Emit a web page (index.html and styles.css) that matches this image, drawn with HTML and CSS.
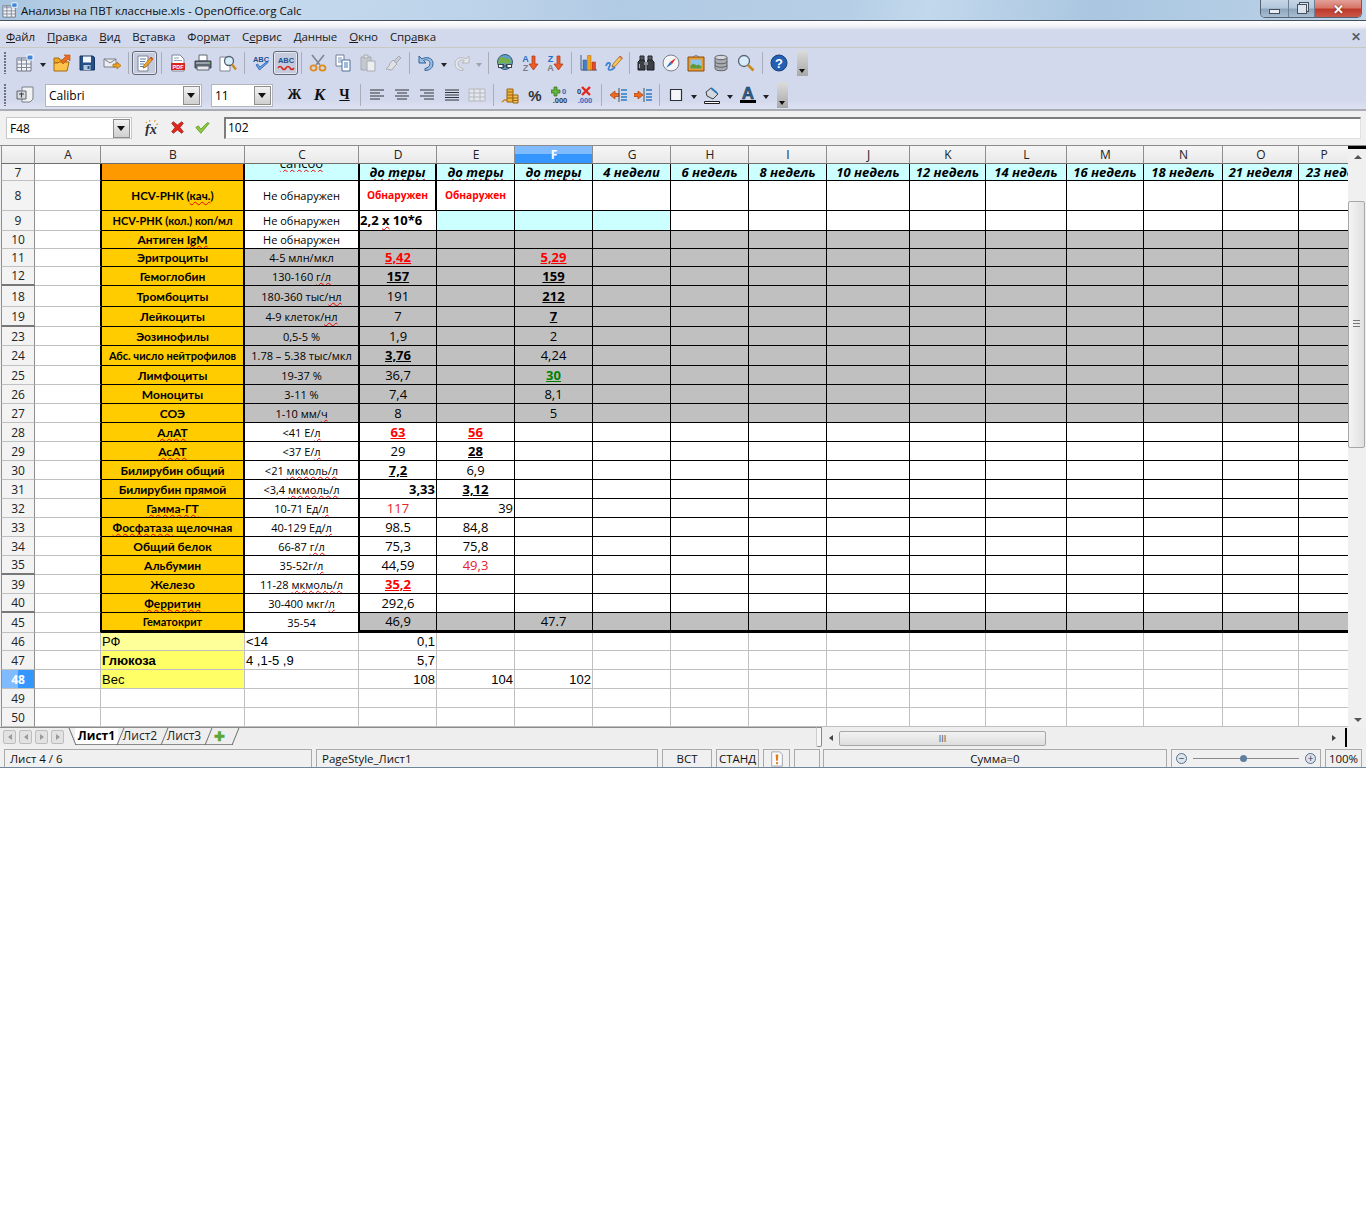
FILE: index.html
```html
<!DOCTYPE html>
<html lang="ru">
<head>
  <meta charset="UTF-8">
  <title>Анализы на ПВТ классные.xls - OpenOffice.org Calc</title>
  <link rel="stylesheet" href="styles.css">
</head>
<body>
  <!-- icon sprite -->
  <svg class="sprite" xmlns="http://www.w3.org/2000/svg">
    <symbol id="i-table" viewBox="0 0 18 18"><path d="M1 4h14v13H1z" fill="#f2f4f8" stroke="#6b7280"/><path d="M1 4h14v3H1z" fill="#aab4c4"/><path d="M1 10h14M1 13.500h14M5.500 4v13M10.500 4v13" stroke="#7d8796" fill="none"/><path d="M11 1h6v5h-6z" fill="#3f86d8" stroke="#fff"/></symbol>
    <symbol id="i-open" viewBox="0 0 18 18"><path d="M1 4h5l1 2h6v3H1z" fill="#f2a91e" stroke="#a36a12"/><path d="M1 17V9h4l1-1h10l-2 9z" fill="#fbc34a" stroke="#a36a12"/><path d="M8 7l5-5-2-1h6v6l-2-2-5 5z" fill="#ee6b1e" stroke="#b4470c" stroke-width=".6"/></symbol>
    <symbol id="i-save" viewBox="0 0 18 18"><path d="M2 2h13l1.500 1.500V16H2z" fill="#24508c" stroke="#17365f"/><path d="M5 2.500h8v6H5z" fill="#f4f6fa"/><path d="M5.500 11h7v5h-7z" fill="#b8c8dc"/><path d="M9.500 12h2v3h-2z" fill="#24508c"/></symbol>
    <symbol id="i-mail" viewBox="0 0 18 18"><path d="M1 5h12v8H1z" fill="#eceef2" stroke="#7b8088"/><path d="M1 5l6 4 6-4" fill="none" stroke="#7b8088"/><path d="M10 10h4V8l4 3.500-4 3.500v-2h-4z" fill="#f0a020" stroke="#a86a10" stroke-width=".7"/></symbol>
    <symbol id="i-edit" viewBox="0 0 18 18"><path d="M2 2h10v15H2z" fill="#fff" stroke="#7d8696"/><path d="M4 5h6M4 7.500h5M4 10h4M4 12.500h3" stroke="#5b7fb0"/><path d="M7 14l1-3 7-8 2 2-7 8z" fill="#f3a52a" stroke="#8a5510" stroke-width=".7"/><path d="M14 4l1-1 2 2-1 1z" fill="#d8402c"/></symbol>
    <symbol id="i-pdf" viewBox="0 0 18 18"><path d="M3 1h8l4 4v12H3z" fill="#fff" stroke="#7d8696"/><path d="M5 4h5M5 6.500h8" stroke="#8aa0bd"/><path d="M2 9h14v7H2z" fill="#d9261c"/><text class="svg-pdf" x="9" y="15" text-anchor="middle">PDF</text></symbol>
    <symbol id="i-print" viewBox="0 0 18 18"><path d="M5 1h8v6H5z" fill="#fff" stroke="#5e6672"/><path d="M1 7h16v7H1z" fill="#5e6672" stroke="#3a414a"/><path d="M2 8h14v2H2z" fill="#9aa3ae"/><path d="M3 12h12v4H3z" fill="#e8eaee" stroke="#5e6672"/><path d="M14 9h2v1h-2z" fill="#5fc04a"/></symbol>
    <symbol id="i-preview" viewBox="0 0 18 18"><path d="M1 3h10v14H1z" fill="#fff" stroke="#7d8696"/><circle cx="10" cy="7" r="4.500" fill="#d6ecfa" stroke="#55606e" stroke-width="1.300"/><path d="M13 10.500l4 5" stroke="#c98a1e" stroke-width="2.400"/></symbol>
    <symbol id="i-spell" viewBox="0 0 18 18"><text class="svg-abc" x="9" y="8" text-anchor="middle" fill="#1d4f94">ABC</text><path d="M4 11l3.500 5L16 8.500l-1-1L8 13l-2.500-3z" fill="#6da3e6" stroke="#1d5eb0" stroke-width=".8"/></symbol>
    <symbol id="i-auto" viewBox="0 0 18 18"><text class="svg-abc" x="9" y="9" text-anchor="middle" fill="#1d4f94">ABC</text><path d="M1 14q2-3 4 0t4 0 4 0 4 0" fill="none" stroke="#d8281c" stroke-width="1.600"/></symbol>
    <symbol id="i-cut" viewBox="0 0 18 18"><path d="M3 1l8 10M15 1L7 11" stroke="#7c8590" stroke-width="1.600"/><ellipse cx="4.500" cy="14" rx="3" ry="2.600" fill="none" stroke="#e08a1a" stroke-width="1.800"/><ellipse cx="13.500" cy="14" rx="3" ry="2.600" fill="none" stroke="#e08a1a" stroke-width="1.800"/></symbol>
    <symbol id="i-copy" viewBox="0 0 18 18"><path d="M2 1h8v11H2z" fill="#fff" stroke="#6e7f96"/><path d="M4 4h4M4 6h4M4 8h4" stroke="#6e90bd"/><path d="M8 6h8v11H8z" fill="#fff" stroke="#4f6f9c"/><path d="M10 9h4M10 11h4M10 13h4" stroke="#3c78c0"/></symbol>
    <symbol id="i-paste" viewBox="0 0 18 18"><path d="M2 3h10v13H2z" fill="#c5c9cf" stroke="#a7abb2"/><path d="M5 1h4v3H5z" fill="#dfe1e4" stroke="#a7abb2"/><path d="M8 7h8v10H8z" fill="#eceef0" stroke="#a7abb2"/></symbol>
    <symbol id="i-brush" viewBox="0 0 18 18"><path d="M10 7l5-5 2 2-5 5z" fill="#c9ccd1" stroke="#a7abb2"/><path d="M9 6l4 4-3 3-2 3-6-1 3-3 1-3z" fill="#dfe1e4" stroke="#a7abb2"/></symbol>
    <symbol id="i-undo" viewBox="0 0 18 18"><path d="M2 2v7h7L6.500 6.500C9 5 13 6 13 9.500c0 3-2.500 4.500-5 5v2c5 0 8-3 8-7C16 4 9.500 2 5 5z" fill="#9cc0e8" stroke="#2f5f96"/></symbol>
    <symbol id="i-redo" viewBox="0 0 18 18"><path d="M16 2v7H9l2.500-2.500C9 5 5 6 5 9.500c0 3 2.500 4.500 5 5v2c-5 0-8-3-8-7C2 4 8.500 2 13 5z" fill="#e6e8ea" stroke="#b4b7bc"/></symbol>
    <symbol id="i-link" viewBox="0 0 18 18"><circle cx="9" cy="8" r="7.500" fill="#5d9fd0" stroke="#3e5a70"/><path d="M3 4q4-2 6 0t5 0l1 4-3 2-5-1-5 1z" fill="#77b04a"/><path d="M2 12h6M10 12h6" stroke="#fff" stroke-width="3"/><path d="M2.500 10.500h5v3h-5zM10.500 10.500h5v3h-5zM6 12h6" fill="none" stroke="#3a4650" stroke-width="1.100"/></symbol>
    <symbol id="i-az" viewBox="0 0 18 18"><text class="svg-sort" x="4.500" y="8" text-anchor="middle" fill="#1f6fc8">A</text><text class="svg-sort" x="4.500" y="17" text-anchor="middle" fill="#7b8088">Z</text><path d="M11 2h3v8h3l-4.500 6L8 10h3z" fill="#ee5a2a" stroke="#a83410" stroke-width=".7"/></symbol>
    <symbol id="i-za" viewBox="0 0 18 18"><text class="svg-sort" x="4.500" y="8" text-anchor="middle" fill="#1f6fc8">Z</text><text class="svg-sort" x="4.500" y="17" text-anchor="middle" fill="#7b8088">A</text><path d="M11 2h3v8h3l-4.500 6L8 10h3z" fill="#ee5a2a" stroke="#a83410" stroke-width=".7"/></symbol>
    <symbol id="i-chart" viewBox="0 0 18 18"><path d="M1 1v15h16" fill="none" stroke="#3d5a80"/><path d="M3 6h3.500v10H3z" fill="#3f7fd0" stroke="#234f8a" stroke-width=".5"/><path d="M7.500 1.500H11V16H7.500z" fill="#f2a21e" stroke="#a86a10" stroke-width=".5"/><path d="M12 8h3.500v8H12z" fill="#e0492a" stroke="#983014" stroke-width=".5"/></symbol>
    <symbol id="i-draw" viewBox="0 0 18 18"><path d="M1 12c1-4 5-4 4-1s-3 5 0 5 4-2 5-3" fill="none" stroke="#3f7fd0" stroke-width="1.700"/><path d="M7 13l1-3 7-8 2.500 2-7 8z" fill="#f6c65a" stroke="#8a5510" stroke-width=".7"/><path d="M14 3l1-1 2.500 2-1 1z" fill="#e0655a"/></symbol>
    <symbol id="i-find" viewBox="0 0 18 18"><path d="M3 2h4v5H3zM11 2h4v5h-4z" fill="#55585e" stroke="#24262a"/><path d="M1 8l2-2h4l1 3v7H1zM17 8l-2-2h-4l-1 3v7h7z" fill="#3b3e44" stroke="#1a1c20"/><path d="M7 8h4v3H7z" fill="#8a8e96"/><path d="M2.500 10v4" stroke="#a3a8b0"/></symbol>
    <symbol id="i-nav" viewBox="0 0 18 18"><circle cx="9" cy="9" r="8" fill="#f4f6f8" stroke="#7b8088"/><path d="M14 4L8 8l2 2z" fill="#d8281c"/><path d="M4 14l4-6 2 2z" fill="#2b6cc4"/></symbol>
    <symbol id="i-gallery" viewBox="0 0 18 18"><path d="M6 3l3-2 3 2" fill="none" stroke="#8a8e96"/><path d="M1 3h16v14H1z" fill="#e89a2c" stroke="#8a4a10"/><path d="M3.500 5.500h11v9h-11z" fill="#8ec4ea"/><path d="M3.500 14.500v-3l3-2 3 2 2-1 3 2v2z" fill="#5f9a38"/></symbol>
    <symbol id="i-db" viewBox="0 0 18 18"><path d="M3 3.500v11c0 3 12 3 12 0v-11z" fill="#a9adb2" stroke="#5e6268"/><ellipse cx="9" cy="3.500" rx="6" ry="2.200" fill="#d5d7da" stroke="#5e6268"/><path d="M3 7.500c0 3 12 3 12 0M3 11c0 3 12 3 12 0" fill="none" stroke="#5e6268"/></symbol>
    <symbol id="i-zoom" viewBox="0 0 18 18"><circle cx="7" cy="7" r="5.500" fill="#d6ecfa" stroke="#5a6470" stroke-width="1.300"/><path d="M11 11l5.500 5.500" stroke="#c98a1e" stroke-width="2.600"/></symbol>
    <symbol id="i-help" viewBox="0 0 18 18"><circle cx="9" cy="9" r="8" fill="#2360b4" stroke="#173f7a"/><text class="svg-help" x="9" y="14" text-anchor="middle">?</text></symbol>
    <symbol id="i-style" viewBox="0 0 18 18"><path d="M6 1h11v12l-3 3H6z" fill="#f0f1f3" stroke="#7b8088"/><path d="M1 5h9v8H1z" fill="#d9dce1" stroke="#5e6268"/><path d="M5.500 6.500v5M3 8h5" stroke="#3a3e44" stroke-width="1.200"/></symbol>
    <symbol id="i-left" viewBox="0 0 18 18"><path d="M2 4h14M2 7h10M2 10h14M2 13h10" stroke="#30343a"/></symbol>
    <symbol id="i-center" viewBox="0 0 18 18"><path d="M2 4h14M4 7h10M2 10h14M4 13h10" stroke="#30343a"/></symbol>
    <symbol id="i-right" viewBox="0 0 18 18"><path d="M2 4h14M6 7h10M2 10h14M6 13h10" stroke="#30343a"/></symbol>
    <symbol id="i-just" viewBox="0 0 18 18"><path d="M2 4h14M2 6.500h14M2 9h14M2 11.500h14M2 14h14" stroke="#30343a"/></symbol>
    <symbol id="i-grid" viewBox="0 0 18 18"><path d="M1 3h16v12H1z" fill="#e4e7ee" stroke="#b4b7bc"/><path d="M1 7h16M1 11h16M6 3v12M12 3v12" stroke="#b4b7bc"/></symbol>
    <symbol id="i-coins" viewBox="0 0 18 18"><path d="M1 16q4-4 6-1" fill="none" stroke="#c98a1e" stroke-width="1.500"/><path d="M6 3h6v13H6z" fill="#efb43c" stroke="#9a6410"/><path d="M6 6h6M6 9h6M6 12h6" stroke="#9a6410"/><path d="M12 9h5v8h-5z" fill="#f4c65a" stroke="#9a6410"/><path d="M12 12h5M12 14.500h5" stroke="#9a6410"/></symbol>
    <symbol id="i-percent" viewBox="0 0 18 18"><text class="svg-pct" x="9" y="15" text-anchor="middle">%</text></symbol>
    <symbol id="i-adddec" viewBox="0 0 18 18"><path d="M3 1h3v3h3v3H6v3H3V7H0V4h3z" fill="#64b43c" stroke="#2f6e18" stroke-width=".7"/><text class="svg-dec" x="13" y="8" text-anchor="middle" fill="#2b6cc4">0</text><text class="svg-dec" x="9" y="17" text-anchor="middle" fill="#30343a">.000</text></symbol>
    <symbol id="i-deldec" viewBox="0 0 18 18"><text class="svg-dec" x="3" y="8" text-anchor="middle" fill="#30343a">0</text><path d="M6 1l8 8M14 1L6 9" stroke="#e0281c" stroke-width="2.400"/><text class="svg-dec" x="9" y="17" text-anchor="middle" fill="#2b6cc4">.000</text></symbol>
    <symbol id="i-outdent" viewBox="0 0 18 18"><path d="M1 9l5-4v2.500h4v3H6V13z" fill="#ee6b1e" stroke="#a83e0c" stroke-width=".7"/><path d="M10 2v14" stroke="#4a4e56"/><path d="M12 4h6M12 8h6M12 11h6M12 14h6" stroke="#2b7cc4" stroke-width="1.300"/></symbol>
    <symbol id="i-indent" viewBox="0 0 18 18"><path d="M9 9L4 5v2.500H0v3h4V13z" fill="#ee6b1e" stroke="#a83e0c" stroke-width=".7"/><path d="M10 2v14" stroke="#4a4e56"/><path d="M12 4h6M12 8h6M12 11h6M12 14h6" stroke="#2b7cc4" stroke-width="1.300"/></symbol>
    <symbol id="i-border" viewBox="0 0 18 18"><path d="M3.500 3.500h11v11h-11z" fill="#f4f6fa" stroke="#2c3038" stroke-width="1.200"/></symbol>
    <symbol id="i-bucket" viewBox="0 0 18 18"><path d="M3 6l5-4 7 6-5 5-6-3z" fill="#d5d9de" stroke="#3a3e44"/><path d="M8 2l6 5" stroke="#2b7cc4" stroke-width="2"/><path d="M1.500 15.500h15v2h-15z" fill="#fff" stroke="#1c1e22"/></symbol>
    <symbol id="i-fontcolor" viewBox="0 0 18 18"><text class="svg-fc" x="9" y="13" text-anchor="middle">A</text><path d="M1 14h16v3H1z" fill="#000"/></symbol>
    <symbol id="i-fx" viewBox="0 0 18 18"><text class="svg-fx" x="1" y="16">fx</text><path d="M2 3l1 1M6 1v2M12 1l-1 2M15 5l-2 1" stroke="#d9a020" stroke-width="1.200"/></symbol>
    <symbol id="i-cancel" viewBox="0 0 18 18"><path d="M4 2l5 4 5-4 2 2-4 5 4 5-2 2-5-4-5 4-2-2 4-5-4-5z" fill="#e0281c" stroke="#8e140c" stroke-width=".8"/></symbol>
    <symbol id="i-accept" viewBox="0 0 18 18"><path d="M1 9l3-2 3 4 8-8 2 1-10 12z" fill="#8ecb3c" stroke="#4a8212" stroke-width=".8"/></symbol>
    <symbol id="i-warn" viewBox="0 0 18 18"><path d="M3 1h9l3 3v13H3z" fill="#fbfbfb" stroke="#9a9ea6"/><path d="M7.500 4h3l-.5 7H8zM8 12.500h2v2.500H8z" fill="#e07a14"/></symbol>
  </svg>

  <div class="window">
    <div class="titlebar">
      <svg class="app-icon"><use href="#i-table"/></svg>
      <span class="title-text">Анализы на ПВТ классные.xls - OpenOffice.org Calc</span>
      <div class="win-buttons">
        <div class="win-btn win-min"><span class="min-glyph"></span></div>
        <div class="win-btn win-max"><span class="max-glyph"></span></div>
        <div class="win-btn win-close">✕</div>
      </div>
    </div>

    <div class="menubar">
      <span><u>Ф</u>айл</span>
      <span><u>П</u>равка</span>
      <span><u>В</u>ид</span>
      <span>В<u>с</u>тавка</span>
      <span>Фо<u>р</u>мат</span>
      <span>С<u>е</u>рвис</span>
      <span><u>Д</u>анные</span>
      <span><u>О</u>кно</span>
      <span>Спр<u>а</u>вка</span>
      <span class="doc-close">✕</span>
    </div>

    <!-- Standard toolbar -->
    <div class="toolbar tb-standard">
      <i class="grip"></i>
      <button class="btn"><svg><use href="#i-table"/></svg></button><i class="drop"></i>
      <button class="btn"><svg><use href="#i-open"/></svg></button>
      <button class="btn"><svg><use href="#i-save"/></svg></button>
      <button class="btn"><svg><use href="#i-mail"/></svg></button>
      <i class="sep"></i>
      <button class="btn on"><svg><use href="#i-edit"/></svg></button>
      <i class="sep"></i>
      <button class="btn"><svg><use href="#i-pdf"/></svg></button>
      <button class="btn"><svg><use href="#i-print"/></svg></button>
      <button class="btn"><svg><use href="#i-preview"/></svg></button>
      <i class="sep"></i>
      <button class="btn"><svg><use href="#i-spell"/></svg></button>
      <button class="btn on"><svg><use href="#i-auto"/></svg></button>
      <i class="sep sep-7"></i>
      <button class="btn"><svg><use href="#i-cut"/></svg></button>
      <button class="btn"><svg><use href="#i-copy"/></svg></button>
      <button class="btn"><svg><use href="#i-paste"/></svg></button>
      <button class="btn"><svg><use href="#i-brush"/></svg></button>
      <i class="sep"></i>
      <button class="btn"><svg><use href="#i-undo"/></svg></button><i class="drop drop-11"></i>
      <button class="btn"><svg><use href="#i-redo"/></svg></button><i class="drop drop-10 off"></i>
      <i class="sep"></i>
      <button class="btn"><svg><use href="#i-link"/></svg></button>
      <button class="btn"><svg><use href="#i-az"/></svg></button>
      <button class="btn"><svg><use href="#i-za"/></svg></button>
      <i class="sep sep-9"></i>
      <button class="btn"><svg><use href="#i-chart"/></svg></button>
      <button class="btn"><svg><use href="#i-draw"/></svg></button>
      <i class="sep sep-7"></i>
      <button class="btn"><svg><use href="#i-find"/></svg></button>
      <button class="btn"><svg><use href="#i-nav"/></svg></button>
      <button class="btn"><svg><use href="#i-gallery"/></svg></button>
      <button class="btn"><svg><use href="#i-db"/></svg></button>
      <button class="btn"><svg><use href="#i-zoom"/></svg></button>
      <i class="sep"></i>
      <button class="btn"><svg><use href="#i-help"/></svg></button>
      <i class="more"></i>
    </div>

    <!-- Formatting toolbar -->
    <div class="toolbar tb-format">
      <i class="grip"></i>
      <button class="btn"><svg><use href="#i-style"/></svg></button>
      <div class="combo combo-font"><span>Calibri</span><i class="combo-arrow"></i></div>
      <div class="combo combo-size"><span>11</span><i class="combo-arrow"></i></div>
      <button class="btn btn-text">Ж</button>
      <button class="btn btn-text btn-italic">К</button>
      <button class="btn btn-text btn-under">Ч</button>
      <i class="sep sep-7"></i>
      <button class="btn"><svg><use href="#i-left"/></svg></button>
      <button class="btn"><svg><use href="#i-center"/></svg></button>
      <button class="btn"><svg><use href="#i-right"/></svg></button>
      <button class="btn"><svg><use href="#i-just"/></svg></button>
      <button class="btn"><svg><use href="#i-grid"/></svg></button>
      <i class="sep"></i>
      <button class="btn"><svg><use href="#i-coins"/></svg></button>
      <button class="btn"><svg><use href="#i-percent"/></svg></button>
      <button class="btn"><svg><use href="#i-adddec"/></svg></button>
      <button class="btn"><svg><use href="#i-deldec"/></svg></button>
      <i class="sep"></i>
      <button class="btn"><svg><use href="#i-outdent"/></svg></button>
      <button class="btn"><svg><use href="#i-indent"/></svg></button>
      <i class="sep"></i>
      <button class="btn"><svg><use href="#i-border"/></svg></button><i class="drop drop-11"></i>
      <button class="btn"><svg><use href="#i-bucket"/></svg></button><i class="drop drop-11"></i>
      <button class="btn"><svg><use href="#i-fontcolor"/></svg></button><i class="drop"></i>
      <i class="more"></i>
    </div>

    <!-- Formula bar -->
    <div class="formulabar">
      <div class="combo combo-name"><span>F48</span><i class="combo-arrow"></i></div>
      <button class="btn btn-f"><svg><use href="#i-fx"/></svg></button>
      <button class="btn btn-f btn-small"><svg><use href="#i-cancel"/></svg></button>
      <button class="btn btn-f btn-small"><svg><use href="#i-accept"/></svg></button>
      <div class="formula-input">102</div>
    </div>

    <!-- Sheet -->
    <div class="sheet">
      <div class="grid-wrap">
        <table class="grid">
          <colgroup>
            <col class="w-rh"><col class="w-a"><col class="w-b"><col class="w-c"><col class="w-78"><col class="w-78"><col class="w-78"><col class="w-78"><col class="w-78"><col class="w-78"><col class="w-j"><col class="w-k"><col class="w-l"><col class="w-m"><col class="w-n"><col class="w-o"><col class="w-p">
          </colgroup>
          <thead>
            <tr class="h18"><th></th><th>A</th><th>B</th><th>C</th><th>D</th><th>E</th><th class="sel">F</th><th>G</th><th>H</th><th>I</th><th>J</th><th>K</th><th>L</th><th>M</th><th>N</th><th>O</th><th class="last">P</th></tr>
          </thead>
          <tbody>
            <tr class="h17 m cyan week"><td class="rh">7</td><td class="a"></td><td class="b orange"></td><td class="c"><div class="clip"><span class="sq">сапсоо</span></div></td><td class="d thickr"><span class="sq">до теры</span></td><td><span class="sq">до теры</span></td><td><span class="sq">до теры</span></td><td>4 недели</td><td>6 недель</td><td>8 недель</td><td>10 недель</td><td>12 недель</td><td>14 недель</td><td>16 недель</td><td>18 недель</td><td>21 неделя</td><td class="cut">23 недели</td></tr>
            <tr class="h30 m"><td class="rh">8</td><td class="a"></td><td class="b tight">HCV-РНК (<span class="sq">кач.</span>)</td><td class="c">Не обнаружен</td><td class="d thickr found">Обнаружен</td><td class="found">Обнаружен</td><td></td><td></td><td></td><td></td><td></td><td></td><td></td><td></td><td></td><td></td><td></td></tr>
            <tr class="h20 m"><td class="rh">9</td><td class="a"></td><td class="b narrow">HCV-РНК (кол.) коп/мл</td><td class="c">Не обнаружен</td><td class="d lb"><strong>2,2 <span class="sq">х</span> 10*6</strong></td><td class="cy"></td><td class="cy"></td><td class="cy"></td><td></td><td></td><td></td><td></td><td></td><td></td><td></td><td></td><td></td></tr>
            <tr class="h18 m gray"><td class="rh">10</td><td class="a"></td><td class="b">Антиген <span class="sq">IgM</span></td><td class="c wh">Не обнаружен</td><td class="d"></td><td></td><td></td><td></td><td></td><td></td><td></td><td></td><td></td><td></td><td></td><td></td><td></td></tr>
            <tr class="h18 m gray"><td class="rh">11</td><td class="a"></td><td class="b">Эритроциты</td><td class="c">4-5 млн/мкл</td><td class="d red bu">5,42</td><td></td><td class="red bu">5,29</td><td></td><td></td><td></td><td></td><td></td><td></td><td></td><td></td><td></td><td></td></tr>
            <tr class="h19 m gray"><td class="rh hid">12</td><td class="a"></td><td class="b">Гемоглобин</td><td class="c">130-160 <span class="sq">г/л</span></td><td class="d bu">157</td><td></td><td class="bu">159</td><td></td><td></td><td></td><td></td><td></td><td></td><td></td><td></td><td></td><td></td></tr>
            <tr class="h21 m gray"><td class="rh">18</td><td class="a"></td><td class="b">Тромбоциты</td><td class="c">180-360 тыс/<span class="sq">нл</span></td><td class="d">191</td><td></td><td class="bu">212</td><td></td><td></td><td></td><td></td><td></td><td></td><td></td><td></td><td></td><td></td></tr>
            <tr class="h20 m gray"><td class="rh hid">19</td><td class="a"></td><td class="b">Лейкоциты</td><td class="c">4-9 клеток/<span class="sq">нл</span></td><td class="d">7</td><td></td><td class="bu">7</td><td></td><td></td><td></td><td></td><td></td><td></td><td></td><td></td><td></td><td></td></tr>
            <tr class="h19 m gray"><td class="rh">23</td><td class="a"></td><td class="b">Эозинофилы</td><td class="c">0,5-5 %</td><td class="d">1,9</td><td></td><td>2</td><td></td><td></td><td></td><td></td><td></td><td></td><td></td><td></td><td></td><td></td></tr>
            <tr class="h20 m gray"><td class="rh">24</td><td class="a"></td><td class="b narrow">Абс. число нейтрофилов</td><td class="c">1.78 – 5.38 тыс/мкл</td><td class="d bu">3,76</td><td></td><td>4,24</td><td></td><td></td><td></td><td></td><td></td><td></td><td></td><td></td><td></td><td></td></tr>
            <tr class="h19 m gray"><td class="rh">25</td><td class="a"></td><td class="b">Лимфоциты</td><td class="c">19-37 %</td><td class="d">36,7</td><td></td><td class="green bu">30</td><td></td><td></td><td></td><td></td><td></td><td></td><td></td><td></td><td></td><td></td></tr>
            <tr class="h19 m gray"><td class="rh">26</td><td class="a"></td><td class="b">Моноциты</td><td class="c">3-11 %</td><td class="d">7,4</td><td></td><td>8,1</td><td></td><td></td><td></td><td></td><td></td><td></td><td></td><td></td><td></td><td></td></tr>
            <tr class="h19 m gray"><td class="rh">27</td><td class="a"></td><td class="b">СОЭ</td><td class="c">1-10 мм/<span class="sq">ч</span></td><td class="d">8</td><td></td><td>5</td><td></td><td></td><td></td><td></td><td></td><td></td><td></td><td></td><td></td><td></td></tr>
            <tr class="h19 m"><td class="rh">28</td><td class="a"></td><td class="b"><span class="sq">АлАТ</span></td><td class="c">&lt;41 Е/<span class="sq">л</span></td><td class="d red bu">63</td><td class="red bu">56</td><td></td><td></td><td></td><td></td><td></td><td></td><td></td><td></td><td></td><td></td><td></td></tr>
            <tr class="h19 m"><td class="rh">29</td><td class="a"></td><td class="b"><span class="sq">АсАТ</span></td><td class="c">&lt;37 Е/<span class="sq">л</span></td><td class="d">29</td><td class="bu">28</td><td></td><td></td><td></td><td></td><td></td><td></td><td></td><td></td><td></td><td></td><td></td></tr>
            <tr class="h19 m"><td class="rh">30</td><td class="a"></td><td class="b">Билирубин общий</td><td class="c">&lt;21 <span class="sq">мкмоль/л</span></td><td class="d bu">7,2</td><td>6,9</td><td></td><td></td><td></td><td></td><td></td><td></td><td></td><td></td><td></td><td></td><td></td></tr>
            <tr class="h19 m"><td class="rh">31</td><td class="a"></td><td class="b">Билирубин прямой</td><td class="c">&lt;3,4 <span class="sq">мкмоль/л</span></td><td class="d rt"><strong>3,33</strong></td><td class="bu">3,12</td><td></td><td></td><td></td><td></td><td></td><td></td><td></td><td></td><td></td><td></td><td></td></tr>
            <tr class="h19 m"><td class="rh">32</td><td class="a"></td><td class="b"><span class="sq">Гамма-ГТ</span></td><td class="c">10-71 Ед/<span class="sq">л</span></td><td class="d redn">117</td><td class="rt">39</td><td></td><td></td><td></td><td></td><td></td><td></td><td></td><td></td><td></td><td></td><td></td></tr>
            <tr class="h19 m"><td class="rh">33</td><td class="a"></td><td class="b"><span class="sq">Фосфатаза</span> щелочная</td><td class="c">40-129 Ед/<span class="sq">л</span></td><td class="d">98.5</td><td>84,8</td><td></td><td></td><td></td><td></td><td></td><td></td><td></td><td></td><td></td><td></td><td></td></tr>
            <tr class="h19 m"><td class="rh">34</td><td class="a"></td><td class="b">Общий белок</td><td class="c">66-87 <span class="sq">г/л</span></td><td class="d">75,3</td><td>75,8</td><td></td><td></td><td></td><td></td><td></td><td></td><td></td><td></td><td></td><td></td><td></td></tr>
            <tr class="h19 m"><td class="rh hid">35</td><td class="a"></td><td class="b">Альбумин</td><td class="c">35-52г/<span class="sq">л</span></td><td class="d">44,59</td><td class="redn">49,3</td><td></td><td></td><td></td><td></td><td></td><td></td><td></td><td></td><td></td><td></td><td></td></tr>
            <tr class="h19 m"><td class="rh">39</td><td class="a"></td><td class="b">Железо</td><td class="c">11-28 <span class="sq">мкмоль/л</span></td><td class="d red bu">35,2</td><td></td><td></td><td></td><td></td><td></td><td></td><td></td><td></td><td></td><td></td><td></td><td></td></tr>
            <tr class="h19 m"><td class="rh hid">40</td><td class="a"></td><td class="b"><span class="sq">Ферритин</span></td><td class="c">30-400 мкг/<span class="sq">л</span></td><td class="d">292,6</td><td></td><td></td><td></td><td></td><td></td><td></td><td></td><td></td><td></td><td></td><td></td><td></td></tr>
            <tr class="h20 m gray r45"><td class="rh">45</td><td class="a"></td><td class="b narrow">Гематокрит</td><td class="c wh">35-54</td><td class="d">46,9</td><td></td><td>47.7</td><td></td><td></td><td></td><td></td><td></td><td></td><td></td><td></td><td></td><td></td></tr>
            <tr class="h18 plain"><td class="rh">46</td><td class="a"></td><td class="b y1">РФ</td><td>&lt;14</td><td class="rt">0,1</td><td></td><td></td><td></td><td></td><td></td><td></td><td></td><td></td><td></td><td></td><td></td><td></td></tr>
            <tr class="h19 plain"><td class="rh">47</td><td class="a"></td><td class="b y2"><strong>Глюкоза</strong></td><td>4 ,1-5 ,9</td><td class="rt">5,7</td><td></td><td></td><td></td><td></td><td></td><td></td><td></td><td></td><td></td><td></td><td></td><td></td></tr>
            <tr class="h19 plain"><td class="rh sel">48</td><td class="a"></td><td class="b y2">Вес</td><td></td><td class="rt">108</td><td class="rt">104</td><td class="rt">102</td><td></td><td></td><td></td><td></td><td></td><td></td><td></td><td></td><td></td><td></td></tr>
            <tr class="h19 plain"><td class="rh">49</td><td class="a"></td><td class="b"></td><td></td><td></td><td></td><td></td><td></td><td></td><td></td><td></td><td></td><td></td><td></td><td></td><td></td><td></td></tr>
            <tr class="h19 plain"><td class="rh">50</td><td class="a"></td><td class="b"></td><td></td><td></td><td></td><td></td><td></td><td></td><td></td><td></td><td></td><td></td><td></td><td></td><td></td><td></td></tr>
          </tbody>
        </table>
      </div>
      <div class="vscroll">
        <i class="split-h"></i>
        <i class="arrow-up"></i>
        <div class="vthumb"><i class="vgrip"></i></div>
        <i class="arrow-down"></i>
      </div>
    </div>

    <!-- Sheet tabs and horizontal scrollbar -->
    <div class="tabbar">
      <div class="tabs">
        <div class="tab-nav"><i class="nav-first"></i></div>
        <div class="tab-nav"><i class="nav-prev"></i></div>
        <div class="tab-nav"><i class="nav-next"></i></div>
        <div class="tab-nav"><i class="nav-last"></i></div>
        <div class="tab active">Лист1</div>
        <div class="tab">Лист2</div>
        <div class="tab">Лист3</div>
        <div class="tab tab-add">✚</div>
      </div>
      <div class="tab-split"></div>
      <div class="hscroll">
        <i class="arrow-left"></i>
        <div class="hthumb">III</div>
        <i class="arrow-right"></i>
      </div>
    </div>

    <!-- Status bar -->
    <div class="statusbar">
      <div class="st st-sheet">Лист 4 / 6</div>
      <div class="st st-style">PageStyle_Лист1</div>
      <div class="st st-ins">ВСТ</div>
      <div class="st st-std">СТАНД</div>
      <div class="st st-warn"><svg><use href="#i-warn"/></svg></div>
      <div class="st st-empty"></div>
      <div class="st st-sum">Сумма=0</div>
      <div class="st st-zoom"><i class="zoom-btn">−</i><div class="zoom-track"><i class="zoom-knob"></i></div><i class="zoom-btn">+</i></div>
      <div class="st st-pct">100%</div>
    </div>
  </div>
</body>
</html>
```

FILE: styles.css
```css
* {
  box-sizing: border-box;
}
html, body {
  margin: 0;
  background: #fff;
}
body {
  font-family: "Open Sans", "Liberation Sans", sans-serif;
  font-size: 12px;
  color: #000;
}
i {
  display: block;
  font-style: normal;
}
.sprite {
  display: none;
}
.svg-pdf { font: bold 5.5px "Liberation Sans", sans-serif; fill: #fff; }
.svg-abc { font: bold 7.5px "Liberation Sans", sans-serif; }
.svg-sort { font: bold 9px "Liberation Sans", sans-serif; }
.svg-help { font: bold 13px "Liberation Sans", sans-serif; fill: #fff; }
.svg-pct { font: bold 15px "Liberation Sans", sans-serif; fill: #30343a; }
.svg-dec { font: bold 7.5px "Liberation Sans", sans-serif; }
.svg-fc { font: bold 17px "Liberation Sans", sans-serif; fill: #2d5f8a; stroke: #12324e; stroke-width: .5; }
.svg-fx { font: italic bold 15px "Liberation Serif", serif; fill: #2b2f36; }

.window {
  width: 1366px;
  height: 768px;
  background: #f0f0f0;
  border-bottom: 1px solid #6f8599;
  overflow: hidden;
}

/* title bar */
.titlebar {
  display: flex;
  align-items: flex-start;
  height: 21px;
  background: linear-gradient(100deg, #a9c5df 0, #c6dbee 15%, #bdd3e9 35%, #b2cbe4 45%, #b6cfe6 62%, #c2d8ec 68%, #aac6e0 80%, #bcd3e9 100%);
  border-bottom: 1px solid #46505c;
}
.app-icon {
  width: 16px;
  height: 16px;
  margin: 2px 0 0 2px;
}
.title-text {
  margin-left: 3px;
  line-height: 22px;
  font-size: 11.5px;
  color: #101010;
}
.win-buttons {
  display: flex;
  margin-left: auto;
  margin-right: 4px;
  height: 18px;
  border: 1px solid #55626f;
  border-top: 0;
  border-radius: 0 0 5px 5px;
  overflow: hidden;
}
.win-btn {
  display: flex;
  align-items: center;
  justify-content: center;
  background: linear-gradient(#c4d5e6 0, #b4c8dc 45%, #8ea6bd 55%, #a8bdd2 100%);
  border-right: 1px solid #6e8092;
}
.win-min { width: 28px; }
.win-max { width: 26px; }
.win-close {
  width: 46px;
  border-right: 0;
  background: linear-gradient(#e3a097 0, #d8776a 45%, #bf3a2c 55%, #c9584a 100%);
  color: #fff;
  font-size: 13px;
  font-weight: bold;
  text-shadow: 0 0 2px #502018;
}
.min-glyph {
  width: 11px;
  height: 5px;
  margin-top: 5px;
  background: #e8eef4;
  border: 1px solid #46505c;
}
.max-glyph {
  width: 10px;
  height: 10px;
  background: #dbe4ee;
  border: 1px solid #46505c;
  box-shadow: 2px -2px 0 -1px #dbe4ee, 2px -2px 0 0 #46505c;
}

/* menu */
.menubar {
  display: flex;
  gap: 12px;
  height: 27px;
  padding: 6px 0 0 6px;
  background: linear-gradient(#fff 0, #eef0f7 6px, #d3d9ec 9px, #d3d9ec 100%);
  border-bottom: 1px solid #c9c9c3;
  font-size: 11.5px;
  line-height: 20px;
  color: #1a1a1a;
  letter-spacing: -.1px;
}
.doc-close {
  margin-left: auto;
  margin-right: 5px;
  font-size: 12px;
  font-weight: bold;
  color: #55606c;
}

/* toolbars */
.toolbar {
  display: flex;
  align-items: center;
  background: #d3d9ec;
}
.tb-standard {
  height: 32px;
  padding-bottom: 2px;
  background: #d3d9ec;
}
.tb-format {
  height: 31px;
  padding-top: 1px;
  background: linear-gradient(#d3d9ec 0, #d3d9ec 70%, #dde2f2 100%);
  border-bottom: 2px solid #a9acb3;
}
.grip {
  width: 12px;
  height: 22px;
  margin-left: 0;
  background: radial-gradient(circle at 1px 1px, #6d7480 1px, transparent 1.2px) 4px 0 / 3px 3px repeat-y;
}
.btn {
  display: flex;
  flex: none;
  align-items: center;
  justify-content: center;
  width: 25px;
  height: 24px;
  padding: 0;
  background: none;
  border: 1px solid transparent;
  border-radius: 3px;
}
.btn svg {
  width: 18px;
  height: 18px;
}
.btn.on {
  background: #c5cbdc;
  border-color: #5f6874;
  box-shadow: inset 0 0 0 1px #e6e9f2;
}
.btn-text {
  font-family: "Liberation Serif", serif;
  font-size: 14px;
  font-weight: bold;
  color: #111;
}
.btn-italic {
  font-style: italic;
  font-size: 17px;
}
.btn-under {
  text-decoration: underline;
}
.sep {
  flex: none;
  position: relative;
  width: 8px;
  height: 22px;
}
.sep::after {
  content: "";
  display: block;
  width: 1px;
  height: 100%;
  margin: 0 auto;
  background: #a9adb8;
}
.sep-7 { width: 7px; }
.sep-9 { width: 9px; }
.drop {
  flex: none;
  width: 12px;
  height: 0;
}
.drop::after {
  content: "";
  display: block;
  width: 0;
  margin: 0 auto;
  border: 3px solid transparent;
  border-top: 4px solid #222;
  border-bottom: 0;
}
.drop-11 { width: 11px; }
.drop-10 { width: 10px; }
.drop.off::after { border-top-color: #a0a3a8; }
.more {
  flex: none;
  position: relative;
  width: 11px;
  height: 26px;
  margin-left: 6px;
  background: linear-gradient(#dcdcdc, #a8a8a8);
}
.more::after {
  content: "";
  position: absolute;
  left: 2px;
  bottom: 3px;
  border: 3px solid transparent;
  border-top: 4px solid #111;
  border-bottom: 0;
}
.tb-format .more { margin-left: 5px; }

.combo {
  display: flex;
  flex: none;
  align-items: center;
  height: 23px;
  padding-left: 3px;
  background: #fff;
  border: 1px solid #b3b6bc;
  font-family: "Open Sans", sans-serif;
  font-size: 12px;
}
.combo span {
  flex: 1;
}
.combo-arrow {
  position: relative;
  width: 17px;
  height: 19px;
  margin-right: 1px;
  background: linear-gradient(#f2f2f2, #cfcfcf);
  border: 1px solid #8e8e8e;
}
.combo-arrow::after {
  content: "";
  position: absolute;
  left: 3px;
  top: 6px;
  border: 4px solid transparent;
  border-top: 5px solid #111;
  border-bottom: 0;
}
.combo-font { width: 157px; margin-left: 8px; }
.combo-size { width: 62px; margin-left: 9px; margin-right: 9px; }

/* formula bar */
.formulabar {
  display: flex;
  align-items: flex-start;
  height: 35px;
  padding: 6px 5px 0 6px;
  background: #f0f0f0;
  border-bottom: 1px solid #8b8b8b;
}
.combo-name {
  width: 126px;
  height: 22px;
  margin-right: 8px;
  border-color: #c8c8c8;
}
.btn-f {
  height: 21px;
}
.btn-f svg {
  width: 17px;
  height: 17px;
}
.btn-f.btn-small svg {
  width: 15px;
  height: 15px;
}
.formula-input {
  flex: 1;
  height: 22px;
  margin-left: 9px;
  padding-left: 2px;
  background: #fff;
  border: 1px solid #e0e0e0;
  border-top: 2px solid #7d7d7d;
  border-left: 2px solid #7d7d7d;
  line-height: 17px;
}

/* sheet */
.sheet {
  display: flex;
  height: 581px;
  padding-left: 1px;
  overflow: hidden;
}
.grid-wrap {
  width: 1347px;
  height: 581px;
  overflow: hidden;
  background: #fff;
}
.grid {
  table-layout: fixed;
  width: 1347px;
  border-collapse: separate;
  border-spacing: 0;
  font-family: "Open Sans", sans-serif;
  font-size: 11px;
}
.w-rh { width: 34px; }
.w-a { width: 66px; }
.w-b { width: 144px; }
.w-c { width: 114px; }
.w-78 { width: 78px; }
.w-j { width: 83px; }
.w-k { width: 76px; }
.w-l { width: 81px; }
.w-m { width: 77px; }
.w-n { width: 79px; }
.w-o { width: 76px; }
.w-p { width: 49px; }
.h17 { height: 17px; }
.h18 { height: 18px; }
.h19 { height: 19px; }
.h20 { height: 20px; }
.h21 { height: 21px; }
.h30 { height: 30px; }

.grid th {
  padding: 0 0 0 1px;
  background: linear-gradient(#f6f6f6, #e9e9e9);
  border-right: 1px solid #8e8e8e;
  border-bottom: 1px solid #6e6e6e;
  font-size: 12px;
  font-weight: normal;
  color: #222;
  line-height: 15px;
}
.grid th:first-child {
  border-left: 1px solid #8e8e8e;
}
.grid th.last {
  border-right: 0;
}
.grid th.sel {
  background: linear-gradient(#80bbff 0, #80bbff 50%, #3397ff 50%, #3397ff 100%);
  font-weight: bold;
  color: #fff;
}
.grid td {
  overflow: hidden;
  padding: 0;
  border-right: 1px solid #c0c0c0;
  border-bottom: 1px solid #c0c0c0;
  text-align: center;
  white-space: nowrap;
  line-height: 15px;
}
.grid td:last-child {
  border-right: 0;
}
.grid td.rh {
  background: #f3f3f3;
  border-left: 1px solid #8e8e8e;
  border-right: 1px solid #8e8e8e;
  border-bottom: 1px solid #c0c0c0;
  font-size: 12px;
  font-style: normal;
  font-weight: normal;
  color: #222;
}
.grid td.rh.hid {
  border-bottom: 2px solid #777;
}
.grid td.rh.sel {
  background: linear-gradient(90deg, #80bbff 0, #80bbff 50%, #3397ff 50%, #3397ff 100%);
  font-weight: bold;
  color: #fff;
}

/* body of the framed table */
.m td {
  border-right-color: #000;
  border-bottom-color: #000;
  font-size: 13px;
}
.m td.a {
  border-bottom-color: #c0c0c0;
}
.m td.rh {
  border-right-color: #8e8e8e;
  border-bottom-color: #c0c0c0;
}
.m td.b {
  background: #ffcc00;
  border-left: 1px solid #000;
  border-right-width: 2px;
  font-family: Lato, "Open Sans", sans-serif;
  font-size: 12px;
  font-weight: bold;
}
.m td.b.tight { font-size: 11.5px; }
.m td.b.narrow { font-size: 11px; }
.m td.orange { background: #ff9900; }
.m td.c {
  font-size: 11px;
}
.m td.d {
  border-left: 1px solid #000;
}
.m td.thickr {
  border-right-width: 2px;
}
.cyan td:not(.rh):not(.a):not(.b) {
  background: #ccffff;
}
.gray td:not(.rh):not(.a):not(.b):not(.wh) {
  background: #c0c0c0;
}
.m td.cy { background: #ccffff; }
.week td {
  font-size: 13px;
  font-style: italic;
  font-weight: bold;
  line-height: 15px;
}
.m.week td.c {
  font-size: 13px;
  font-style: normal;
  font-weight: normal;
  vertical-align: top;
}
.clip {
  height: 8px;
  overflow: hidden;
}
.clip .sq {
  display: block;
  margin-top: -8px;
  height: 16px;
}
.m td.cut {
  padding-left: 7px;
  text-align: left;
}
.m td.found {
  font-size: 10.2px;
  font-weight: bold;
  color: #ff0000;
}
.m td.lb { text-align: left; }
.grid td.rt {
  padding-right: 1px;
  text-align: right;
}
.bu {
  font-weight: bold;
  text-decoration: underline;
}
.grid .red {
  color: #ff0000;
}
.grid .redn {
  color: #e8202a;
}
.grid .green {
  color: #008000;
}
.sq {
  text-decoration: underline wavy #f00000 1px;
  text-decoration-skip-ink: none;
  text-underline-offset: 1px;
}
.r45 td:not(.rh):not(.a):not(.c) {
  border-bottom-width: 3px;
}

/* rows below the frame */
.plain td {
  font-family: "Liberation Sans", sans-serif;
  font-size: 13px;
}
.plain td:not(.rh):not(.rt) {
  padding-left: 1px;
  text-align: left;
}
.plain td.rh {
  font-family: "Open Sans", sans-serif;
  font-size: 12px;
}
.y1 { background: #ffff99; }
.y2 { background: #ffff66; }

/* vertical scrollbar */
.vscroll {
  position: relative;
  width: 18px;
  height: 581px;
  background: #f0f0f0;
}
.split-h {
  height: 3px;
  background: #000;
}
.arrow-up, .arrow-down {
  position: absolute;
  left: 6px;
  border: 4px solid transparent;
}
.arrow-up {
  top: 9px;
  border-bottom: 4px solid #555;
  border-top: 0;
}
.arrow-down {
  bottom: 5px;
  border-top: 4px solid #555;
  border-bottom: 0;
}
.vthumb {
  position: absolute;
  top: 55px;
  left: 0;
  width: 17px;
  height: 247px;
  background: linear-gradient(90deg, #f4f4f4, #e0e0e0);
  border: 1px solid #a8a8a8;
  border-radius: 2px;
}
.vgrip {
  width: 7px;
  height: 7px;
  margin: 118px auto 0;
  border-top: 1px solid #777;
  border-bottom: 1px solid #777;
  background: linear-gradient(#777, #777) center / 100% 1px no-repeat;
}

/* tabs */
.tabbar {
  display: flex;
  height: 20px;
  background: #eeeeee;
}
.tabs {
  display: flex;
  width: 816px;
  padding-left: 3px;
  border-top: 1px solid #8a8a8a;
}
.tab-nav {
  display: flex;
  align-items: center;
  justify-content: center;
  width: 13px;
  height: 14px;
  margin: 2px 3px 0 0;
  background: #e2e2e2;
  border: 1px solid #bdbdbd;
  border-radius: 2px;
}
.nav-first, .nav-prev {
  border: 3px solid transparent;
  border-right: 4px solid #9a9a9a;
  border-left: 0;
}
.nav-next, .nav-last {
  border: 3px solid transparent;
  border-left: 4px solid #9a9a9a;
  border-right: 0;
}
.tab {
  position: relative;
  width: 44px;
  height: 17px;
  font-size: 12px;
  line-height: 16px;
  text-align: center;
  color: #222;
  border-bottom: 1px solid #8a8a8a;
}
.tab::after {
  content: "";
  position: absolute;
  top: 0;
  right: -3px;
  width: 1px;
  height: 17px;
  background: #6e6e6e;
  transform: skewX(-22deg);
}
.tab.active {
  width: 43px;
  margin-left: 8px;
  font-weight: bold;
  color: #000;
  background: #fff;
}
.tab.active::before {
  content: "";
  position: absolute;
  top: 0;
  left: -3px;
  width: 1px;
  height: 17px;
  background: #6e6e6e;
  transform: skewX(22deg);
}
.tab-add {
  width: 27px;
  margin-left: 0;
  color: #5aa83a;
  font-size: 13px;
  font-weight: bold;
}
.tab-split {
  width: 6px;
  height: 20px;
  background: #f6f6f6;
  border: 1px solid #8a8a8a;
  border-left-color: #ccc;
  border-radius: 0 0 2px 2px;
}
.hscroll {
  display: flex;
  position: relative;
  flex: 1;
  align-items: center;
  margin-left: 4px;
  padding-top: 2px;
  border-right: 21px solid #eee;
}
.arrow-left, .arrow-right {
  border: 3px solid transparent;
}
.arrow-left {
  margin-left: 3px;
  border-right: 4px solid #444;
  border-left: 0;
}
.arrow-right {
  margin-left: auto;
  margin-right: 9px;
  border-left: 4px solid #444;
  border-right: 0;
}
.hscroll::after {
  content: "";
  position: absolute;
  top: 1px;
  right: -2px;
  width: 2px;
  height: 19px;
  background: #000;
}
.hthumb {
  width: 207px;
  height: 15px;
  margin-left: 6px;
  background: linear-gradient(#f2f2f2, #dedede);
  border: 1px solid #a8a8a8;
  border-radius: 2px;
  font-size: 9px;
  line-height: 13px;
  text-align: center;
  color: #444;
}

/* status bar */
.statusbar {
  display: flex;
  height: 20px;
  padding: 2px 0 0 4px;
  background: #f0f0f0;
}
.st {
  flex: none;
  height: 18px;
  margin-right: 4px;
  border: 1px solid #a9a9a9;
  border-bottom: 0;
  font-size: 11.5px;
  line-height: 17px;
  color: #111;
  text-align: center;
  overflow: hidden;
}
.st-sheet { width: 308px; padding-left: 5px; text-align: left; }
.st-style { width: 342px; padding-left: 5px; text-align: left; }
.st-ins { width: 50px; }
.st-std { width: 43px; }
.st-warn { width: 27px; }
.st-warn svg { display: block; width: 16px; height: 16px; margin: 1px auto 0; }
.st-empty { width: 26px; margin-right: 3px; }
.st-sum { width: 344px; }
.st-zoom {
  display: flex;
  align-items: center;
  width: 150px;
  padding: 0 4px;
}
.st-pct { width: 37px; }
.zoom-btn {
  flex: none;
  width: 11px;
  height: 11px;
  background: #dde4ec;
  border: 1px solid #55708c;
  border-radius: 50%;
  font-size: 10px;
  line-height: 8px;
  text-align: center;
  color: #23405c;
}
.zoom-track {
  position: relative;
  flex: 1;
  height: 1px;
  margin: 0 6px;
  background: #8a8a8a;
}
.zoom-knob {
  position: absolute;
  top: -3px;
  left: 47px;
  width: 7px;
  height: 7px;
  background: #5f7f9f;
  border-radius: 50%;
}
```
